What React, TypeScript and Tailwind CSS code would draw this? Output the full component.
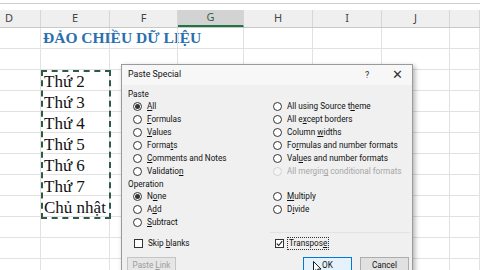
import React from "react";

const colW = ["w-[41px]", "w-[69px]", "w-[68px]", "w-[66px]", "w-[69px]", "w-[69px]", "w-[68px]", "w-[30px]"];
const colLabels = ["D", "E", "F", "G", "H", "I", "J", ""];
const eCells: Record<number, string> = {
  2: "Thứ 2",
  3: "Thứ 3",
  4: "Thứ 4",
  5: "Thứ 5",
  6: "Thứ 6",
  7: "Thứ 7",
  8: "Chủ nhật",
};

function Radio({ checked = false, disabled = false }: { checked?: boolean; disabled?: boolean }) {
  return (
    <span
      className={
        "w-[9px] h-[9px] rounded-full border flex items-center justify-center shrink-0 " +
        (disabled ? "border-[#d4d4d4] bg-[#f4f4f4]" : "border-[#333333] bg-white")
      }
    >
      {checked && <span className="w-[5px] h-[5px] rounded-full bg-[#333333]" />}
    </span>
  );
}

function Opt({ label, checked, disabled }: { label: React.ReactNode; checked?: boolean; disabled?: boolean }) {
  return (
    <div className="h-[13px] flex items-center gap-[5px]">
      <Radio checked={checked} disabled={disabled} />
      <span className={"leading-none whitespace-nowrap " + (disabled ? "text-[#a6a6a6]" : "text-[#111]")}>{label}</span>
    </div>
  );
}

function Check({ checked, label, focus }: { checked?: boolean; label: React.ReactNode; focus?: boolean }) {
  return (
    <div className="h-[13px] flex items-center gap-[4px]">
      <span className="w-[9px] h-[9px] border border-[#333333] bg-white flex items-center justify-center shrink-0">
        {checked && (
          <svg width="7" height="7" viewBox="0 0 7 7">
            <path d="M0.8 3.6 L2.7 5.5 L6.2 1.2" stroke="#222" strokeWidth="1.1" fill="none" />
          </svg>
        )}
      </span>
      <span
        className={
          "leading-none whitespace-nowrap text-[#111] px-[1px] py-[1px] " +
          (focus ? "outline outline-1 outline-dotted outline-[#333]" : "")
        }
      >
        {label}
      </span>
    </div>
  );
}

export default function App() {
  const rows = Array.from({ length: 12 }, (_, i) => i);
  return (
    <div className="w-[480px] h-[270px] relative overflow-hidden bg-white" style={{ fontFamily: "'Noto Sans', sans-serif" }}>
      {/* top strip */}
      <div className="h-[10px] bg-white">
        <div className="h-[4px] border-b border-[#cfcfcf]" />
      </div>
      {/* column headers */}
      <div className="flex h-[18px] bg-[#efefef] border-b border-[#c8c8c8]">
        {colLabels.map((l, i) => (
          <div
            key={i}
            className={
              colW[i] +
              " h-full flex items-center text-[11px] border-r border-[#d6d6d6] " +
              (i === 0 ? "justify-start pl-[5px] " : "justify-center ") +
              (i === 3 ? "bg-[#d3d3d3] text-[#3d5e48] border-b-2 border-b-[#217346]" : "text-[#444]")
            }
          >
            {l}
          </div>
        ))}
      </div>
      {/* rows */}
      {rows.map((r) => (
        <div key={r} className="flex h-[21px]">
          {colW.map((w, c) => (
            <div key={c} className={w + " h-full border-r border-b border-[#e1e1e1] relative flex items-end"}>
              {c === 1 && r === 0 && (
                <span
                  className="absolute left-[2px] bottom-[3px] whitespace-nowrap font-bold text-[15.5px] leading-none text-[#2a6fae]"
                  style={{ fontFamily: "'Liberation Serif', serif" }}
                >
                  ĐẢO CHIỀU DỮ LIỆU
                </span>
              )}
              {c === 1 && eCells[r] && (
                <span
                  className="pl-[3px] whitespace-nowrap text-[17px] leading-none text-[#111]"
                  style={{ fontFamily: "'Liberation Serif', serif" }}
                >
                  {eCells[r]}
                </span>
              )}
            </div>
          ))}
        </div>
      ))}

      {/* marching ants selection */}
      <div className="absolute left-[41px] top-[70px] w-[70px] h-[149px] border-2 border-dashed border-[#2f5a48]" />

      {/* dialog */}
      <div
        className="absolute left-[121px] top-[64px] w-[292px] h-[220px] bg-[#f0f0f0] border border-[#9a9a9a] shadow-[2px_2px_5px_rgba(0,0,0,0.3)] text-[8.2px]"
        style={{ fontFamily: "Roboto, 'Noto Sans', sans-serif" }}
      >
        <div className="h-[20px] bg-[#f7f7f7] flex items-center pl-[6px] relative">
          <span className="text-[8.8px] text-[#111]">Paste Special</span>
          <span className="absolute left-[243px] top-[4px] text-[9px] text-[#333]">?</span>
          <span className="absolute left-[270px] top-[1px] text-[13px] leading-[18px] text-[#333] font-light">✕</span>
        </div>
        <div className="pl-[6px] h-[12px] mt-[3px] flex items-center text-[#111]">Paste</div>
        <div className="pl-[11px] grid grid-cols-[140px_1fr]">
          <div className="flex flex-col">
            <Opt checked label={<><u>A</u>ll</>} />
            <Opt label={<><u>F</u>ormulas</>} />
            <Opt label={<><u>V</u>alues</>} />
            <Opt label={<>Forma<u>t</u>s</>} />
            <Opt label={<><u>C</u>omments and Notes</>} />
            <Opt label={<>Validatio<u>n</u></>} />
          </div>
          <div className="flex flex-col">
            <Opt label={<>All using Source t<u>h</u>eme</>} />
            <Opt label={<>All e<u>x</u>cept borders</>} />
            <Opt label={<>Column <u>w</u>idths</>} />
            <Opt label={<>Fo<u>r</u>mulas and number formats</>} />
            <Opt label={<>Val<u>u</u>es and number formats</>} />
            <Opt disabled label={<>All mergin<u>g</u> conditional formats</>} />
          </div>
        </div>
        <div className="pl-[6px] h-[12px] flex items-center text-[#111]">Operation</div>
        <div className="pl-[11px] grid grid-cols-[140px_1fr]">
          <div className="flex flex-col">
            <Opt checked label={<>N<u>o</u>ne</>} />
            <Opt label={<>A<u>d</u>d</>} />
            <Opt label={<><u>S</u>ubtract</>} />
          </div>
          <div className="flex flex-col">
            <Opt label={<><u>M</u>ultiply</>} />
            <Opt label={<>D<u>i</u>vide</>} />
          </div>
        </div>
        <div className="ml-[148px] mr-[2px] mt-[3px] border-t border-[#e2e2e2]" />
        <div className="pl-[12px] mt-[4px] grid grid-cols-[141px_1fr]">
          <Check label={<>Skip <u>b</u>lanks</>} />
          <Check checked focus label={<>Transpos<u>e</u></>} />
        </div>
        <div className="flex mt-[7px] pl-[5px]">
          <div className="w-[49px] h-[18px] pt-[2px] border border-[#c4c4c4] bg-[#e6e6e6] text-[#9c9c9c] flex items-start justify-center leading-[10px]">
            Paste <u className="ml-[2px]">L</u>ink
          </div>
          <div className="ml-[127px] w-[49px] h-[18px] pt-[2px] border border-[#0078d7] bg-[#e5f1fb] text-[#111] flex items-start justify-center leading-[10px]">
            OK
          </div>
          <div className="ml-[8px] w-[49px] h-[18px] pt-[2px] border border-[#adadad] bg-[#e1e1e1] text-[#111] flex items-start justify-center leading-[10px]">
            Cancel
          </div>
        </div>
      </div>

      {/* mouse cursor */}
      <svg className="absolute left-[313px] top-[261px]" width="10" height="14" viewBox="0 0 10 14">
        <path d="M0.5 0.5 L0.5 11 L3 8.6 L4.8 12.6 L6.4 11.9 L4.7 8.1 L8 8.1 Z" fill="white" stroke="black" strokeWidth="0.9" />
      </svg>
    </div>
  );
}
